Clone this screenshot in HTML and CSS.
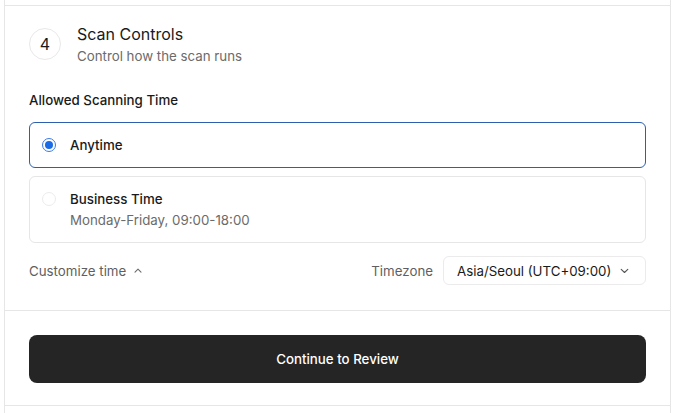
FILE: index.html
```html
<!DOCTYPE html>
<html lang="en">
<head>
<meta charset="utf-8">
<title>Scan Controls</title>
<link rel="stylesheet" href="styles.css">
</head>
<body>
<div class="panel">
  <div class="prev"></div>
  <section class="step">
    <header class="step-head">
      <div class="step-num">4</div>
      <div class="step-text">
        <h2 class="step-title">Scan Controls</h2>
        <p class="step-sub">Control how the scan runs</p>
      </div>
    </header>

    <div class="field-label">Allowed Scanning Time</div>

    <div class="options">
      <label class="option option-selected">
        <span class="radio radio-on"><span class="radio-dot"></span></span>
        <span class="option-body">
          <span class="option-title">Anytime</span>
        </span>
      </label>
      <label class="option">
        <span class="radio"></span>
        <span class="option-body">
          <span class="option-title">Business Time</span>
          <span class="option-desc">Monday-Friday, 09:00-18:00</span>
        </span>
      </label>
    </div>

    <div class="controls-row">
      <button class="customize" type="button">Customize time
        <svg class="chev-up" width="8" height="5" viewBox="0 0 8 5"><path d="M1 4.2 4 1.2 7 4.2" fill="none" stroke="#6b6b6b" stroke-width="1.1" stroke-linecap="round" stroke-linejoin="round"/></svg>
      </button>
      <div class="tz">
        <span class="tz-label">Timezone</span>
        <div class="select">
          <span class="select-value">Asia/Seoul (UTC+09:00)</span>
          <svg class="chev-down" width="9" height="6" viewBox="0 0 9 6"><path d="M1.2 1.3 4.5 4.5 7.8 1.3" fill="none" stroke="#555" stroke-width="1.1" stroke-linecap="round" stroke-linejoin="round"/></svg>
        </div>
      </div>
    </div>
  </section>

  <section class="actions">
    <button class="primary" type="button">Continue to Review</button>
  </section>
</div>
</body>
</html>
```

FILE: styles.css
```css
* { box-sizing: border-box; }

html, body {
  margin: 0;
  padding: 0;
  background: #ffffff;
}

body {
  font-family: Inter, "Noto Sans", "Liberation Sans", sans-serif;
  color: #1a1a1a;
  font-size: 13.3px;
  line-height: 20px;
}

.panel {
  margin-left: 4px;
  width: 667px;
  min-height: 413px;
  border-left: 1px solid #e6e6e6;
  border-right: 1px solid #e6e6e6;
}

.prev {
  height: 5px;
}

.step {
  border-top: 1px solid #e6e6e6;
  padding: 16px 24px 25px 24px;
}

.step-head {
  display: flex;
  align-items: center;
  gap: 16px;
}

.step-num {
  width: 32px;
  height: 32px;
  border-radius: 50%;
  border: 1px solid #e8e8e8;
  display: flex;
  align-items: center;
  justify-content: center;
  font-size: 16px;
  font-weight: 400;
  color: #1a1a1a;
  flex: none;
}

.step-title {
  margin: 0;
  font-size: 16px;
  line-height: 24px;
  font-weight: 400;
  color: #1a1a1a;
}

.step-sub {
  margin: 0;
  font-size: 13.3px;
  line-height: 20px;
  color: #6b6b6b;
}

.field-label {
  margin-top: 24px;
  font-weight: 500;
  color: #1a1a1a;
}

.options {
  margin-top: 12px;
  display: flex;
  flex-direction: column;
  gap: 8px;
}

.option {
  display: flex;
  align-items: flex-start;
  gap: 14px;
  padding: 12px 12px;
  border: 1px solid #e6e6e6;
  border-radius: 6px;
}

.option-selected {
  border-color: #2c5fad;
}

.radio {
  flex: none;
  width: 14px;
  height: 14px;
  margin-top: 3px;
  border-radius: 50%;
  border: 1px solid #ececec;
  display: flex;
  align-items: center;
  justify-content: center;
}

.radio-on {
  border: 1.3px solid #3a7be0;
}

.radio-dot {
  width: 8px;
  height: 8px;
  border-radius: 50%;
  background: #1a6be6;
}

.option-body {
  display: flex;
  flex-direction: column;
}

.option-title {
  font-weight: 500;
  color: #1a1a1a;
}

.option-desc {
  margin-top: 1px;
  color: #6b6b6b;
}

.controls-row {
  margin-top: 13px;
  display: flex;
  align-items: center;
  justify-content: space-between;
}

.customize {
  border: 0;
  background: none;
  padding: 0;
  font: inherit;
  color: #5f5f5f;
  display: flex;
  align-items: center;
  gap: 8px;
}

.chev-up {
  margin-top: -1px;
}

.tz {
  display: flex;
  align-items: center;
  gap: 10px;
}

.tz-label {
  color: #5f5f5f;
}

.select {
  width: 203px;
  height: 29px;
  border: 1px solid #ebebeb;
  border-radius: 6px;
  padding: 0 16px 0 13px;
  display: flex;
  align-items: center;
  justify-content: space-between;
  color: #1a1a1a;
}

.actions {
  border-top: 1px solid #e6e6e6;
  border-bottom: 1px solid #e6e6e6;
  padding: 24px 24px 22px 24px;
}

.primary {
  width: 100%;
  height: 48px;
  border: 0;
  border-radius: 8px;
  background: #252525;
  color: #ffffff;
  font: inherit;
  font-weight: 500;
  cursor: pointer;
}
```
